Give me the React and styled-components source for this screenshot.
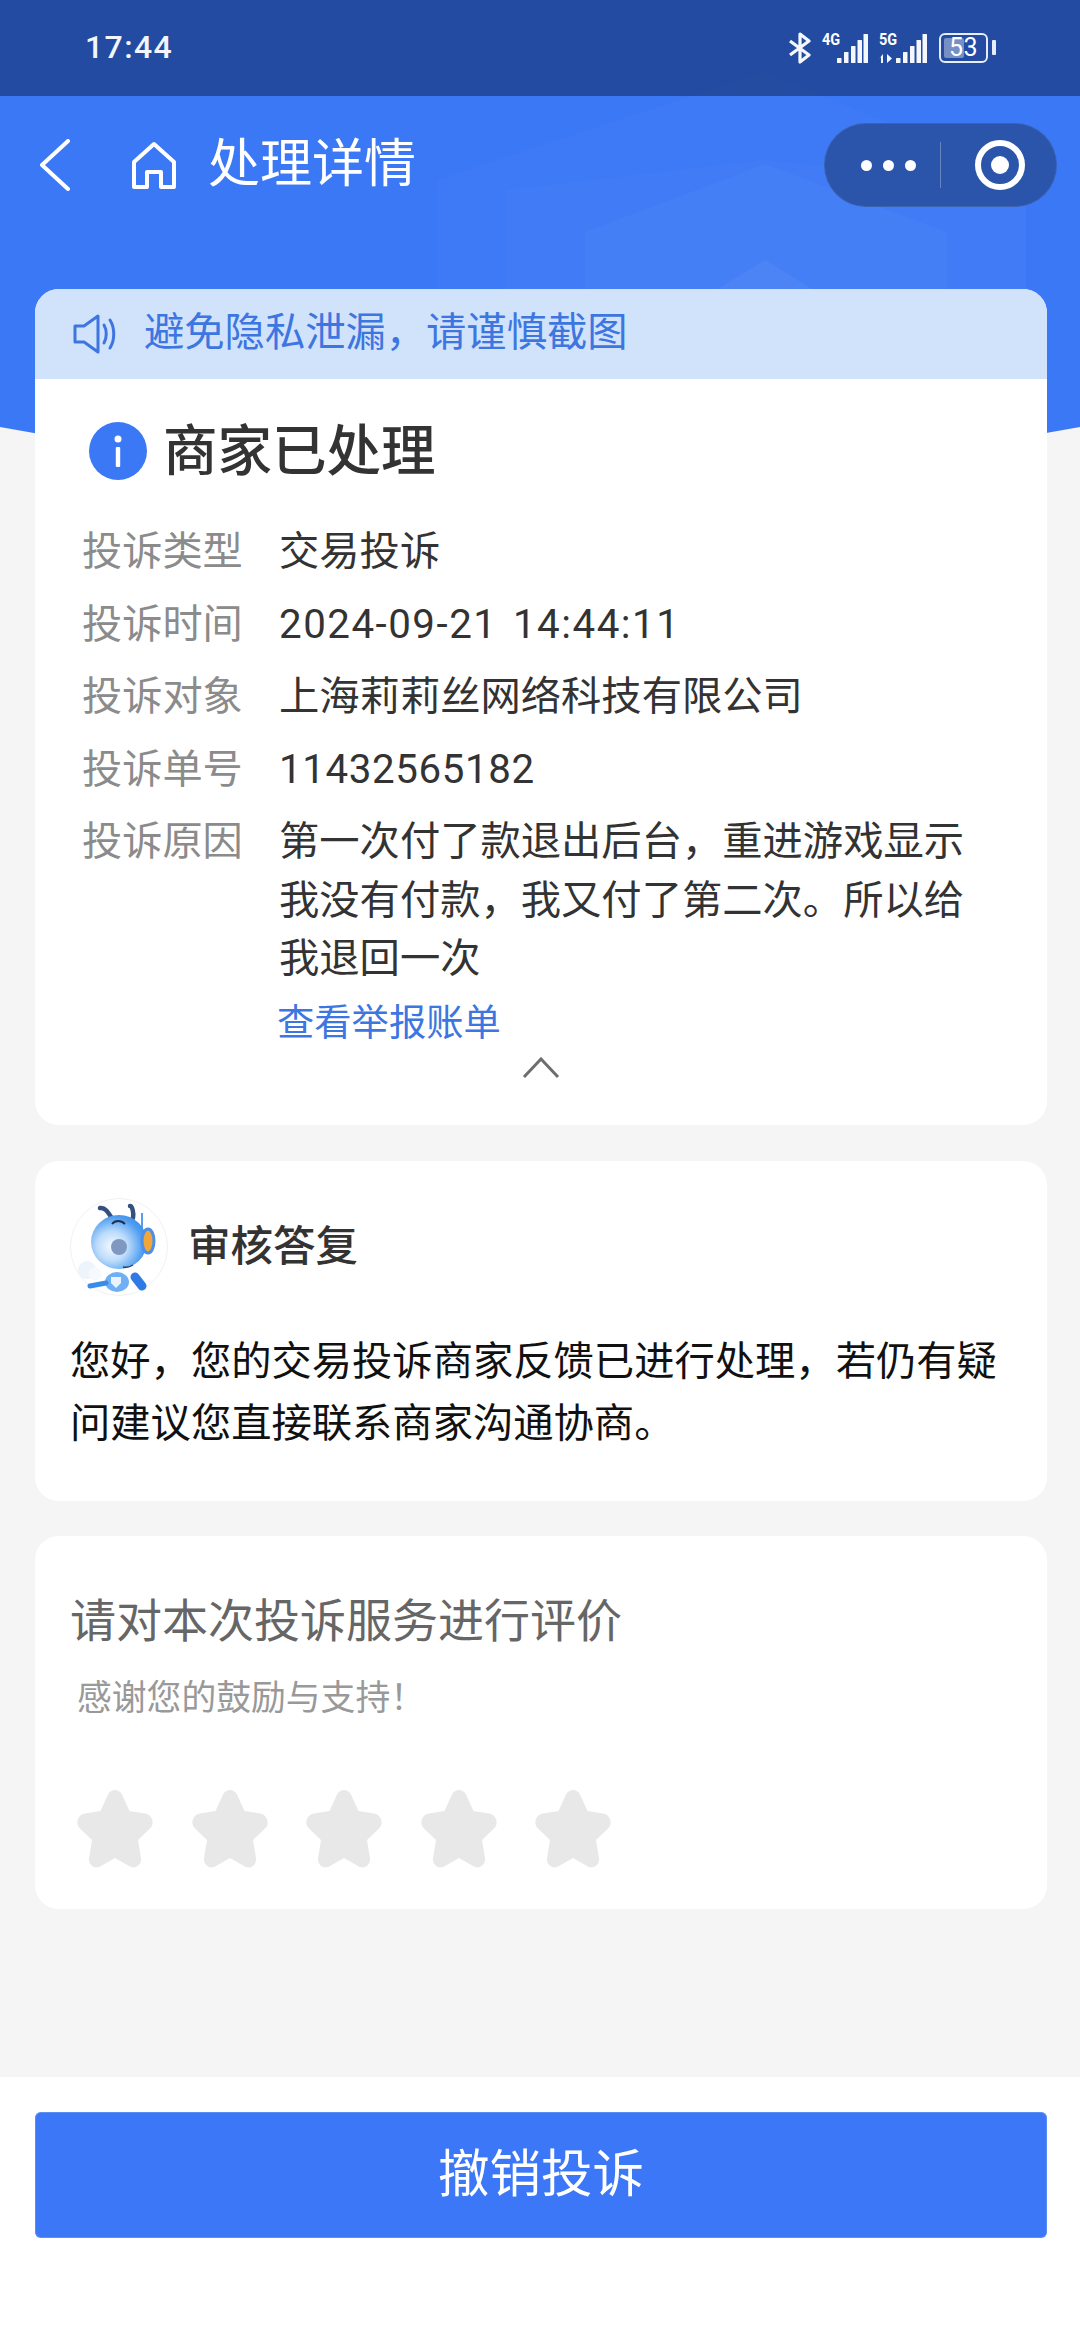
import React from 'react';
import styled, { createGlobalStyle } from 'styled-components';

const Global = createGlobalStyle`
  html, body { margin: 0; padding: 0; background: #f5f5f5; }
  * { box-sizing: border-box; }
`;
const FONT = `Roboto, "Noto Sans CJK SC", sans-serif`;

const Page = styled.div`
  position: relative; width: 1080px; height: 2351px; overflow: hidden;
  display: flex; flex-direction: column; background: #f5f5f5; font-family: ${FONT}; color: #333;
`;
const Hero = styled.div`
  position: absolute; left: -260px; top: -200px; width: 1600px; height: 669px;
  background: #3b78f6; border-radius: 50% / 0 0 160px 160px;
`;
const HeroArt = styled.svg`
  position: absolute; left: 0; top: 0; width: 1080px; height: 430px;
`;
const StatusBar = styled.div`
  position: relative; height: 96px; flex: none; background: rgba(31, 67, 144, .84);
  display: flex; align-items: center; padding: 0 84px 0 85px; justify-content: space-between;
`;
const Clock = styled.span`
  font: 500 32px/1 Roboto, sans-serif; color: #f2f5fc; letter-spacing: 1.4px; margin-top: -2px;
`;
const StatusIcons = styled.div`
  display: flex; align-items: center; height: 96px;
`;
const NetWrap = styled.div`
  position: relative; width: ${p => p.$w}px; height: 30px; margin-left: ${p => p.$ml}px; margin-top: -1px;
`;
const NetLabel = styled.span`
  position: absolute; left: 0; top: -1px; font: 700 17px/15px Roboto, sans-serif; color: #fff; transform: scaleX(.85); transform-origin: left;
`;
const Battery = styled.div`
  position: relative; width: 49px; height: 30px; margin-left: ${p => p.$ml}px; border: 2.5px solid #e6ecf8; border-radius: 6px;
  display: flex; align-items: center; justify-content: center; overflow: hidden; margin-top: -1px;
`;
const BatteryFill = styled.div`
  position: absolute; left: 3px; top: 3px; bottom: 3px; width: 20px; background: rgba(255,255,255,.38); border-radius: 2px;
`;
const BatteryText = styled.span`
  position: relative; font: 400 25px/1 Roboto, sans-serif; color: #fff; letter-spacing: .5px;
`;
const BatteryTip = styled.div`
  width: 4px; height: 15px; margin-left: 4px; background: #e6ecf8; border-radius: 1px; margin-top: -1px;
`;
const NavBar = styled.div`
  position: relative; height: 138px; flex: none; display: flex; align-items: center; padding: 0 23px 0 38px;
`;
const NavIcon = styled.svg`
  display: block; flex: none; margin-left: ${p => p.$ml || 0}px;
`;
const NavTitle = styled.h1`
  margin: 0 0 0 31px; font: 400 52px/1 ${FONT}; color: #fff;
`;
const Capsule = styled.div`
  margin-left: auto; width: 233px; height: 84px; border-radius: 42px; background: #2b55ab;
  display: flex; align-items: center; box-shadow: inset 0 0 0 1px rgba(255,255,255,.08);
`;
const Dots = styled.div`
  width: 116px; display: flex; justify-content: center; gap: 11px; padding-left: 12px;
`;
const Dot = styled.i`
  width: 11px; height: 11px; border-radius: 50%; background: #fff; display: block;
`;
const Divider = styled.div`
  width: 1px; height: 46px; background: rgba(255,255,255,.28);
`;
const Target = styled.div`
  width: 50px; height: 50px; margin-left: 34px; border-radius: 50%; border: 6px solid #fff;
  display: flex; align-items: center; justify-content: center;
`;
const TargetDot = styled.div`
  width: 18px; height: 18px; border-radius: 50%; background: #fff;
`;
const Main = styled.main`
  position: relative; flex: 1; padding: 55px 33px 0 35px; display: flex; flex-direction: column; gap: 36px;
`;
const Card = styled.section`
  background: #fff; border-radius: 24px; overflow: hidden; height: ${p => p.$h}px; flex: none; margin-top: ${p => p.$mt || 0}px;
`;
const Notice = styled.div`
  height: 90px; background: #d1e2fb; display: flex; align-items: center; padding-left: 38px;
`;
const NoticeText = styled.span`
  margin-left: 25px; font: 400 40.3px/1 ${FONT}; color: #3d76e0; margin-top: -2px;
`;
const Status = styled.div`
  display: flex; align-items: center; padding: 0 0 0 54px; height: 144px;
`;
const InfoBadge = styled.div`
  width: 58px; height: 58px; border-radius: 50%; background: #3b78f6; position: relative; flex: none;
`;
const StatusTitle = styled.h2`
  margin: 0 0 0 16px; font: 500 54.5px/1 ${FONT}; color: #333;
`;
const Rows = styled.dl`
  margin: 0; padding: 0 68px 0 47px; display: flex; flex-direction: column; gap: 14px;
`;
const Row = styled.div`
  display: grid; grid-template-columns: 197px 1fr;
`;
const Label = styled.dt`
  font: 400 40.2px/58px ${FONT}; color: #8b8b8b; white-space: nowrap;
`;
const Value = styled.dd`
  margin: 0; font: 400 40.3px/58.5px ${FONT}; color: #333; letter-spacing: ${p => p.$ls || 0}px; word-spacing: ${p => p.$ws || 0}px;
`;
const LinkText = styled.a`
  display: block; margin: 8px 0 0 242px; font: 400 37.3px/52px ${FONT}; color: #3d76e0;
`;
const ChevronRow = styled.div`
  display: flex; justify-content: center; padding-top: 8px;
`;
const ReplyHead = styled.div`
  display: flex; align-items: center; padding: 37px 0 0 35px;
`;
const Avatar = styled.svg`
  width: 98px; height: 98px; display: block; flex: none;
`;
const ReplyTitle = styled.h3`
  margin: 0 0 0 20px; font: 500 42.5px/1 ${FONT}; color: #333;
`;
const ReplyBody = styled.p`
  margin: 35px 36px 0 35px; font: 400 40.3px/62px ${FONT}; color: #111;
`;
const RateTitle = styled.h3`
  margin: 0; padding: 62px 0 0 35px; font: 400 46px/1 ${FONT}; color: #666;
`;
const RateSub = styled.p`
  margin: 0; padding: 37px 0 0 42px; font: 400 34.8px/1 ${FONT}; color: #999;
`;
const Stars = styled.div`
  display: flex; gap: 38.6px; padding: 74px 0 0 42px;
`;
const Footer = styled.footer`
  position: relative; height: 274px; flex: none; background: #fff; padding: 35px 33px 0 35px;
`;
const Cancel = styled.button`
  display: block; width: 100%; height: 126px; border: 0; border-radius: 6px; background: #3b77f6;
  box-shadow: inset 0 0 0 1px rgba(120,170,245,.5);
  color: #fff; font: 400 51.5px/1 ${FONT}; padding: 0;
`;

const Star = () => (
  <svg width="76" height="78" viewBox="0 0 76 78" style={{ display: 'block' }}>
    <path d="M31 4.500C34-1.500 42-1.500 45 4.500L52.500 21 68 23.500C75 24.500 78 33 73.500 38L61 50 64 68C65 75 58 80 52 76L38 68 24 76C18 80 11 75 12 68L15 50 2.500 38C-2 33 1 24.500 8 23.500L23.500 21z" fill="#e8e8e8" />
  </svg>
);

const Bars = () => (
  <svg width="31" height="30" viewBox="0 0 31 30" style={{ position: 'absolute', right: 0, top: 0 }}>
    {[[0, 5], [7, 11], [14, 17], [20.5, 23], [26.500, 29]].map(([x, h], i) => (
      <rect key={i} x={x} y={30 - h} width="4.500" height={h} fill="#f4f7fd" rx=".5" />
    ))}
  </svg>
);

export default function App() {
  return (
    <Page>
      <Global />
      <Hero />
      <HeroArt viewBox="0 0 1080 430">
        <path d="M437 430V180L765 72l261 108v250z" fill="#fff" opacity=".02" />
        <path d="M506 430V190l260-30 260 30v240z" fill="#fff" opacity=".02" />
        <path d="M585 430V232l180-68 182 68v198z" fill="#fff" opacity=".025" />
        <path d="M700 300l65-40 65 40z" fill="#fff" opacity=".04" />
      </HeroArt>
      <StatusBar>
        <Clock>17:44</Clock>
        <StatusIcons>
          <svg width="24" height="32" viewBox="0 0 24 32" fill="none" stroke="#f4f7fd" strokeWidth="3.2">
            <path d="M2 9l19 14-9 7V2l9 7L2 23" strokeLinejoin="round" />
          </svg>
          <NetWrap $w={46} $ml={10}>
            <NetLabel>4G</NetLabel>
            <Bars />
          </NetWrap>
          <NetWrap $w={48} $ml={11}>
            <NetLabel>5G</NetLabel>
            <svg width="18" height="9" viewBox="0 0 18 9" style={{ position: 'absolute', left: 0, top: 21 }}>
              <path d="M4 0v9H2V3L0 5zM8 0l5 4.500-5 4.500z" fill="#f4f7fd" />
            </svg>
            <Bars />
          </NetWrap>
          <Battery $ml={12}>
            <BatteryFill />
            <BatteryText>53</BatteryText>
          </Battery>
          <BatteryTip />
        </StatusIcons>
      </StatusBar>
      <NavBar>
        <NavIcon width="33" height="52" viewBox="0 0 33 52" fill="none" stroke="#fff" strokeWidth="4">
          <path d="M30 2L4 26l26 24" strokeLinecap="round" strokeLinejoin="round" />
        </NavIcon>
        <NavIcon $ml={60} width="46" height="48" viewBox="0 0 46 48" fill="none" stroke="#fff" strokeWidth="4">
          <path d="M3 21L23 3l20 18v25H30V31H16v15H3z" strokeLinejoin="round" />
        </NavIcon>
        <NavTitle>处理详情</NavTitle>
        <Capsule>
          <Dots><Dot /><Dot /><Dot /></Dots>
          <Divider />
          <Target><TargetDot /></Target>
        </Capsule>
      </NavBar>
      <Main>
        <Card $h={836}>
          <Notice>
            <svg width="46" height="40" viewBox="0 0 46 40" fill="none" stroke="#3d76e0" strokeWidth="3">
              <path d="M2 12h9L25 2v36L11 28H2z" strokeLinejoin="round" />
              <path d="M31 11c3 5 3 13 0 18M37 6c5 8 5 20 0 28" strokeLinecap="round" />
            </svg>
            <NoticeText>避免隐私泄漏，请谨慎截图</NoticeText>
          </Notice>
          <Status>
            <InfoBadge>
              <svg width="58" height="58" viewBox="0 0 58 58" fill="#fff">
                <circle cx="29" cy="17" r="3.500" />
                <rect x="26.800" y="25" width="4.400" height="20" rx="1" />
              </svg>
            </InfoBadge>
            <StatusTitle>商家已处理</StatusTitle>
          </Status>
          <Rows>
            <Row><Label>投诉类型</Label><Value>交易投诉</Value></Row>
            <Row><Label>投诉时间</Label><Value $ls={1.5} $ws={4}>2024-09-21 14:44:11</Value></Row>
            <Row><Label>投诉对象</Label><Value>上海莉莉丝网络科技有限公司</Value></Row>
            <Row><Label>投诉单号</Label><Value $ls={.6}>11432565182</Value></Row>
            <Row><Label>投诉原因</Label><Value>第一次付了款退出后台，重进游戏显示我没有付款，我又付了第二次。所以给我退回一次</Value></Row>
          </Rows>
          <LinkText>查看举报账单</LinkText>
          <ChevronRow>
            <svg width="38" height="22" viewBox="0 0 38 22" fill="none" stroke="#6e6e6e" strokeWidth="3">
              <path d="M2 20L19 2l17 18" />
            </svg>
          </ChevronRow>
        </Card>
        <Card $h={340}>
          <ReplyHead>
            <Avatar viewBox="0 0 98 98">
              <defs>
                <radialGradient id="head" cx=".38" cy=".58" r=".68">
                  <stop offset="0" stopColor="#f6faff" />
                  <stop offset=".4" stopColor="#bcdcfb" />
                  <stop offset=".8" stopColor="#4f9df0" />
                  <stop offset="1" stopColor="#3a8cec" />
                </radialGradient>
              </defs>
              <circle cx="49" cy="49" r="48.500" fill="#fff" stroke="#f1f1f1" />
              <path d="M43 22C38 14 35 9 30 10M63 20C64 14 62 8 60 8" fill="none" stroke="#35507f" strokeWidth="4.500" strokeLinecap="round" />
              <path d="M72 15v18" stroke="#5c9cf0" strokeWidth="2" />
              <ellipse cx="49" cy="44" rx="28" ry="27" fill="url(#head)" />
              <path d="M42 26c3-4 9-4 13 0" fill="none" stroke="#1f2e4a" strokeWidth="1.800" />
              <circle cx="49" cy="49" r="8" fill="#7f98c0" />
              <ellipse cx="78" cy="43" rx="6" ry="12" fill="#f0a63b" stroke="#4a8fe8" strokeWidth="3" />
              <path d="M53 69c4 1 7 0 10-2" fill="none" stroke="#24406f" strokeWidth="1.500" />
              <ellipse cx="47" cy="84" rx="12" ry="10" fill="#6fb0f4" />
              <path d="M36 85L20 88" stroke="#3a8ceb" strokeWidth="5" strokeLinecap="round" />
              <path d="M65 79l7 9" stroke="#2f7ae4" strokeWidth="9" strokeLinecap="round" />
              <path d="M41 79h10v6l-5 5-5-5z" fill="#eaf4fe" />
              <circle cx="17" cy="72" r="9" fill="#eef4fb" />
              <circle cx="25" cy="76" r="6.500" fill="#f6f9fd" />
            </Avatar>
            <ReplyTitle>审核答复</ReplyTitle>
          </ReplyHead>
          <ReplyBody>您好，您的交易投诉商家反馈已进行处理，若仍有疑问建议您直接联系商家沟通协商。</ReplyBody>
        </Card>
        <Card $h={373} $mt={-1}>
          <RateTitle>请对本次投诉服务进行评价</RateTitle>
          <RateSub>感谢您的鼓励与支持！</RateSub>
          <Stars><Star /><Star /><Star /><Star /><Star /></Stars>
        </Card>
      </Main>
      <Footer><Cancel>撤销投诉</Cancel></Footer>
    </Page>
  );
}
